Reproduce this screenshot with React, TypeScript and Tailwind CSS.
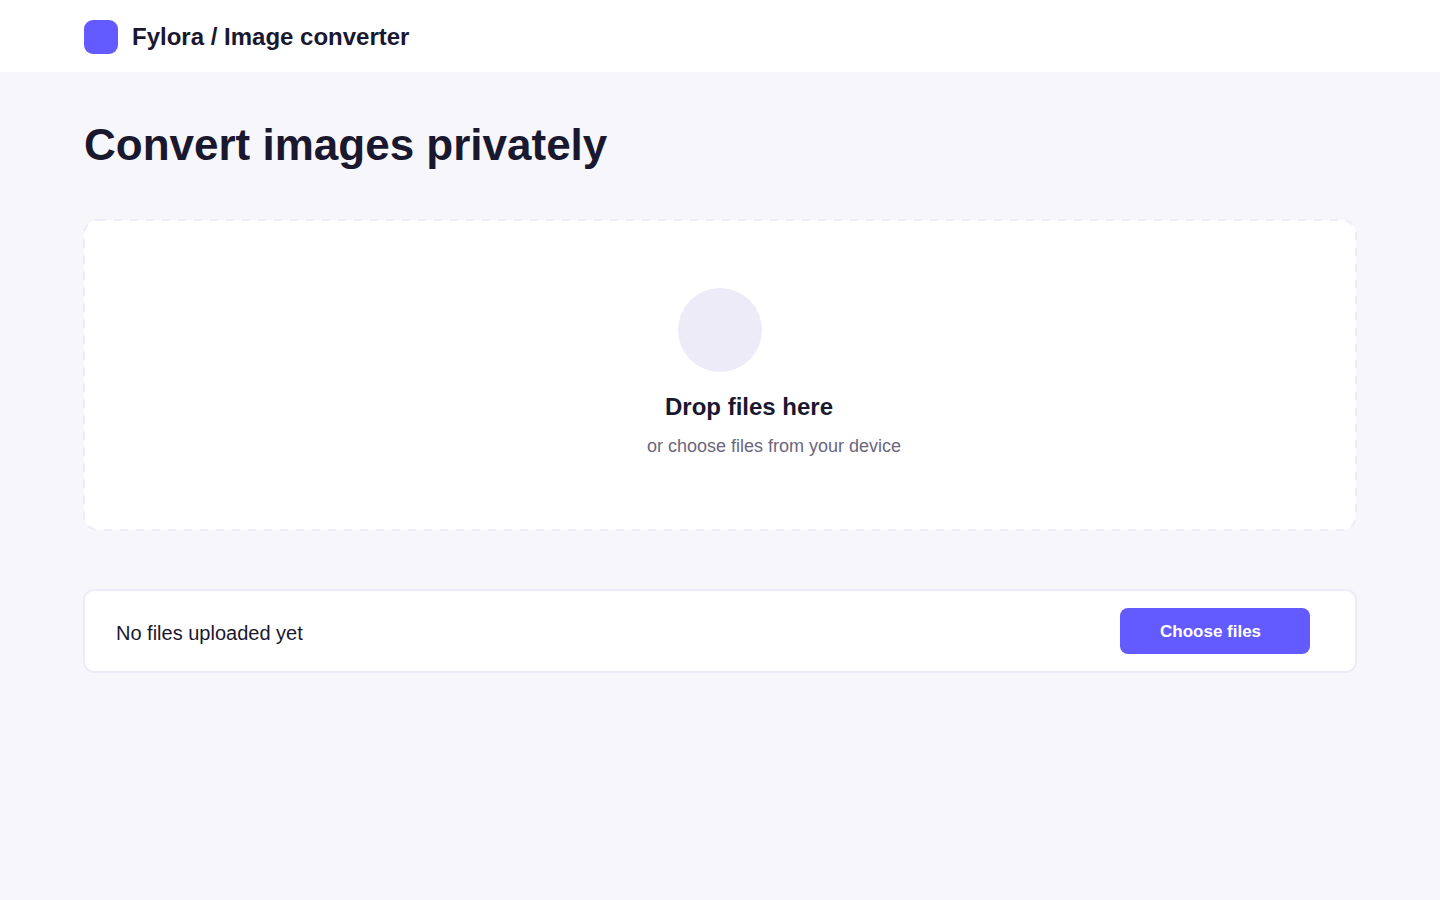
export default function App() {
  return (
    <div className="min-h-screen bg-[#f7f6fb] font-['Liberation_Sans',Arial,sans-serif] text-[#19182f]">
      <header className="flex h-[72px] items-center bg-white px-[84px] pt-[2px]">
        <div className="flex items-center gap-[14px]">
          <span className="size-[34px] rounded-[9px] bg-[#635bff]" aria-hidden="true" />
          <span className="text-2xl font-bold">Fylora / Image converter</span>
        </div>
      </header>
      <main className="px-[84px] pt-12">
        <h1 className="text-[44px] leading-[50px] font-bold">Convert images privately</h1>
        <section className="relative mt-[50px] h-[310px] rounded-[14px] bg-white">
          <svg className="pointer-events-none absolute inset-0 size-full overflow-visible" aria-hidden="true">
            <rect width="100%" height="100%" rx="14" fill="none" stroke="#eeebf8" strokeWidth="2" strokeDasharray="8 8" />
          </svg>
          <div className="mx-auto flex w-[146px] flex-col pt-[68px] whitespace-nowrap">
            <span className="size-[84px] self-center rounded-full bg-[#eeebf8]" aria-hidden="true" />
            <h2 className="mt-[19px] pl-[18px] text-2xl font-bold">Drop files here</h2>
            <p className="mt-[9px] text-lg text-[#6b667d]">or choose files from your device</p>
          </div>
        </section>
        <section className="-mx-px mt-[59px] flex h-[84px] items-center justify-between rounded-[11px] border-2 border-[#eeebf8] bg-white pr-[45px] pl-[31px]">
          <p className="pt-1 text-xl">No files uploaded yet</p>
          <button type="button" className="h-[46px] w-[190px] rounded-lg bg-[#635bff] pt-[2px] pl-10 text-left text-[17px] font-bold text-white">
            Choose files
          </button>
        </section>
      </main>
    </div>
  );
}
